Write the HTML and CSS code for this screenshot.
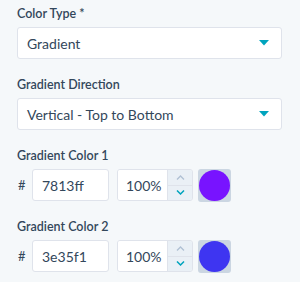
FILE: index.html
```html
<!DOCTYPE html>
<html>
<head>
<meta charset="utf-8">
<link rel="stylesheet" href="styles.css">
</head>
<body>
<div class="panel">
  <div class="field">
    <div class="label">Color Type *</div>
    <div class="select">
      <span>Gradient</span>
      <svg class="caret" width="10" height="6" viewBox="0 0 10 6"><polygon points="0,0 10,0 5,5.5" fill="#00a4bd"/></svg>
    </div>
  </div>
  <div class="field">
    <div class="label">Gradient Direction</div>
    <div class="select">
      <span>Vertical - Top to Bottom</span>
      <svg class="caret" width="10" height="6" viewBox="0 0 10 6"><polygon points="0,0 10,0 5,5.5" fill="#00a4bd"/></svg>
    </div>
  </div>
  <div class="field">
    <div class="label">Gradient Color 1</div>
    <div class="color-row">
      <span class="hash">#</span>
      <div class="input hex">7813ff</div>
      <div class="number">
        <div class="num-val">100%</div>
        <div class="spin">
          <div class="spin-btn"><svg width="9" height="5" viewBox="0 0 9 5"><polyline points="1,4.5 4.5,1 8,4.5" fill="none" stroke="#b0c1d4" stroke-width="1.3"/></svg></div>
          <div class="spin-btn"><svg width="9" height="5" viewBox="0 0 9 5"><polyline points="1,0.5 4.5,4 8,0.5" fill="none" stroke="#00a4bd" stroke-width="1.5"/></svg></div>
        </div>
      </div>
      <div class="swatch"><div class="dot purple"></div></div>
    </div>
  </div>
  <div class="field">
    <div class="label">Gradient Color 2</div>
    <div class="color-row">
      <span class="hash">#</span>
      <div class="input hex">3e35f1</div>
      <div class="number">
        <div class="num-val">100%</div>
        <div class="spin">
          <div class="spin-btn"><svg width="9" height="5" viewBox="0 0 9 5"><polyline points="1,4.5 4.5,1 8,4.5" fill="none" stroke="#b0c1d4" stroke-width="1.3"/></svg></div>
          <div class="spin-btn"><svg width="9" height="5" viewBox="0 0 9 5"><polyline points="1,0.5 4.5,4 8,0.5" fill="none" stroke="#00a4bd" stroke-width="1.5"/></svg></div>
        </div>
      </div>
      <div class="swatch"><div class="dot blue"></div></div>
    </div>
  </div>
</div>
</body>
</html>
```
FILE: styles.css
```css
html, body {
  margin: 0;
  padding: 0;
  background: #f5f8fa;
}
body {
  font-family: Lato, "Open Sans", sans-serif;
  color: #33475b;
}
.panel {
  padding: 5px 18px 0 17px;
}
.field {
  margin-bottom: 17px;
}
.label {
  font-size: 12.5px;
  line-height: 18px;
  font-weight: 600;
  margin-bottom: 4px;
}
.select {
  box-sizing: border-box;
  height: 32px;
  background: #fff;
  border: 1px solid #dfe3eb;
  border-radius: 3px;
  display: flex;
  align-items: center;
  justify-content: space-between;
  padding: 0 12px 0 9px;
  font-size: 14px;
}
.caret {
  display: block;
}
.color-row {
  display: flex;
  align-items: center;
  height: 32px;
}
.hash {
  width: 14px;
  font-size: 13px;
  padding-left: 1px;
}
.input {
  box-sizing: border-box;
  height: 32px;
  background: #fff;
  border: 1px solid #dfe3eb;
  border-radius: 3px;
  font-size: 14px;
  display: flex;
  align-items: center;
}
.hex {
  width: 77px;
  padding-left: 9px;
}
.number {
  box-sizing: border-box;
  margin-left: 8px;
  width: 76px;
  height: 32px;
  display: flex;
  border: 1px solid #dfe3eb;
  border-radius: 3px;
  overflow: hidden;
}
.num-val {
  flex: 1;
  background: #fff;
  font-size: 14px;
  display: flex;
  align-items: center;
  padding-left: 8px;
}
.spin {
  width: 24px;
  display: flex;
  flex-direction: column;
  background: #eaf0f6;
  border-left: 1px solid #dfe3eb;
}
.spin-btn {
  flex: 1;
  display: flex;
  align-items: center;
  justify-content: center;
}
.spin-btn + .spin-btn {
  border-top: 1px solid #dfe3eb;
}
.spin-btn svg {
  display: block;
}
.swatch {
  margin-left: 5px;
  width: 33px;
  height: 33px;
  background: #cbd6e2;
  border-radius: 3px;
  display: flex;
  align-items: center;
  justify-content: center;
}
.dot {
  width: 31px;
  height: 31px;
  border-radius: 50%;
}
.purple { background: #7813ff; }
.blue { background: #3e35f1; }
```
